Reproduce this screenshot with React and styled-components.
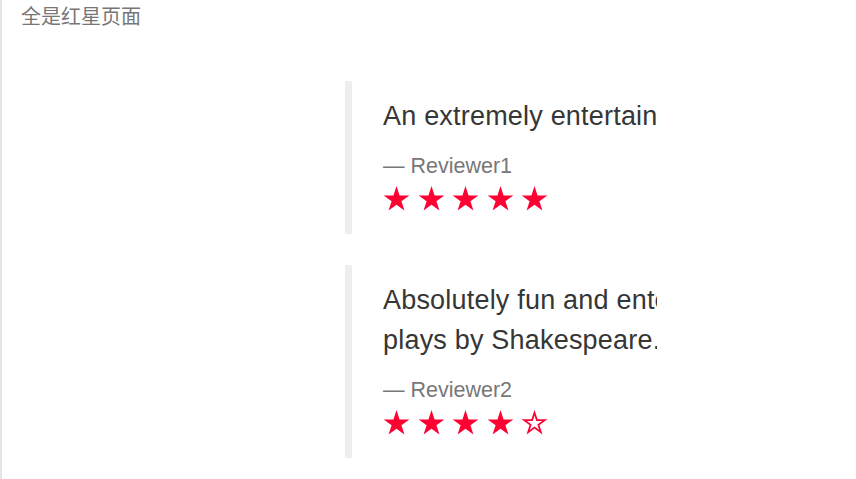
import styled, { createGlobalStyle } from 'styled-components';

const GlobalStyle = createGlobalStyle`
  html, body {
    margin: 0;
    padding: 0;
    background: #fff;
  }
  body {
    font-family: "Liberation Sans", Arial, sans-serif;
  }
`;

const Page = styled.div`
  min-height: 100vh;
  box-sizing: border-box;
  border-left: 2px solid #e2e5ea;
  padding: 1px 0 17px 19px;
`;

const Title = styled.h1`
  margin: 0 0 51px;
  font-family: "Noto Sans CJK SC", sans-serif;
  font-size: 20px;
  font-weight: 400;
  line-height: 29px;
  color: #777;
`;

const List = styled.div`
  display: flex;
  flex-direction: column;
  gap: 31px;
  margin-left: 324px;
`;

const Quote = styled.blockquote`
  margin: 0;
  width: 312px;
  box-sizing: border-box;
  overflow: hidden;
  border-left: 7px solid #eee;
  padding: 15px 0 23px 31px;
`;

const Body = styled.p`
  margin: 0;
  width: 630px;
  font-size: 27px;
  letter-spacing: 0.2px;
  line-height: 40px;
  color: #363636;
`;

const Author = styled.footer`
  margin-top: 15px;
  font-size: 21.5px;
  line-height: 31px;
  color: #777;
  white-space: nowrap;
`;

const Stars = styled.div`
  display: flex;
  gap: 7.5px;
  margin-top: 4px;
`;

const StarSvg = styled.svg`
  display: block;
  width: 27px;
  height: 25px;
`;

const POINTS =
  '50,0 61.23,34.55 97.55,34.55 68.16,55.9 79.39,90.45 50,69.1 20.61,90.45 31.84,55.9 2.45,34.55 38.77,34.55';

const Star = ({ filled }) => (
  <StarSvg viewBox="0 0 100 92">
    {filled ? (
      <polygon points={POINTS} fill="#ff0033" />
    ) : (
      <polygon
        points={POINTS}
        fill="#fff"
        stroke="#ff0033"
        strokeWidth="8"
        strokeLinejoin="miter"
        transform="translate(50 48) scale(0.8) translate(-50 -48)"
      />
    )}
  </StarSvg>
);

const reviews = [
  {
    text: 'An extremely entertaining play by Shakespeare.',
    author: 'Reviewer1',
    rating: 5,
  },
  {
    text: 'Absolutely fun and entertaining. One of the best plays by Shakespeare.',
    author: 'Reviewer2',
    rating: 4,
  },
];

const App = () => (
  <>
    <GlobalStyle />
    <Page>
      <Title>全是红星页面</Title>
      <List>
        {reviews.map((r) => (
          <Quote key={r.author}>
            <Body>{r.text}</Body>
            <Author>— {r.author}</Author>
            <Stars>
              {[1, 2, 3, 4, 5].map((n) => (
                <Star key={n} filled={n <= r.rating} />
              ))}
            </Stars>
          </Quote>
        ))}
      </List>
    </Page>
  </>
);

export default App;
